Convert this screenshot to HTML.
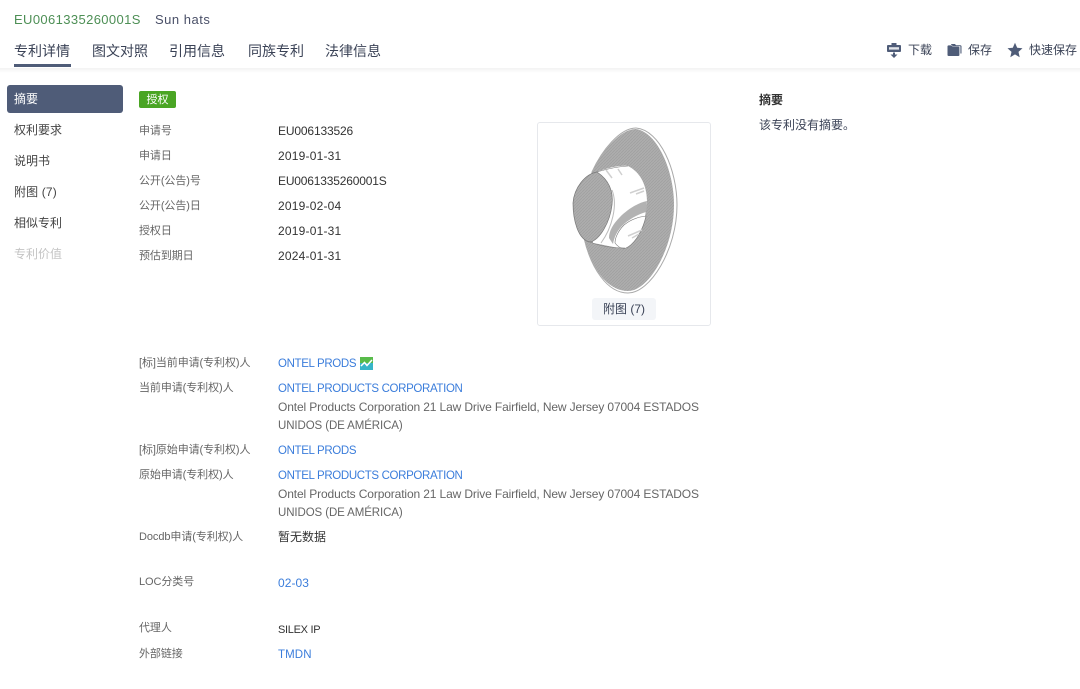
<!DOCTYPE html>
<html lang="zh"><head><meta charset="utf-8"><title>Sun hats</title>
<style>
html,body{margin:0;padding:0;background:#fff}
body{position:relative;width:1080px;height:689px;overflow:hidden;font-family:"Liberation Sans","Noto Sans CJK SC",sans-serif;color:#333}
.t{position:absolute;white-space:nowrap;line-height:20px;height:20px}
.l{font-size:11px;color:#666;left:139px;letter-spacing:-.08px}
.v{font-size:12px;color:#333;left:278px;letter-spacing:.2px}
.c{font-size:11.500px;letter-spacing:-.35px;margin-top:1px}
.a{color:#3b7ddb}
.g{color:#666}
.s{font-size:12px;left:14px;color:#444}
.n{font-size:14px;top:41px;color:#3a4256}
.r{font-size:12px;top:40px;color:#3a4256}
</style></head><body>
<div style="position:absolute;left:0;top:68px;width:1080px;height:5px;background:linear-gradient(#f3f3f3,#fff)"></div>
<div class="t" style="left:14px;top:10px;font-size:13px;color:#4d8f55;letter-spacing:.38px">EU0061335260001S</div>
<div class="t" style="left:155px;top:10px;font-size:13px;color:#4a5068;letter-spacing:.5px">Sun hats</div>
<div class="t n" style="left:14px">专利详情</div>
<div class="t n" style="left:92px">图文对照</div>
<div class="t n" style="left:169px">引用信息</div>
<div class="t n" style="left:248px">同族专利</div>
<div class="t n" style="left:325px">法律信息</div>
<div style="position:absolute;left:14px;top:64px;width:57px;height:3px;background:#4f5c78"></div>

<svg style="position:absolute;left:887px;top:43px" width="14" height="15" viewBox="0 0 14 15"><path d="M4.500 0h5v2h3.500c.6 0 1 .4 1 1v5c0 .6-.4 1-1 1H1c-.6 0-1-.4-1-1V3c0-.6.4-1 1-1h3.500z" fill="#4f5c78"/><path d="M2 4.200h10v2.400H2z" fill="#e2e5ea"/><path d="M6 9.500h2v2h2.500L7 15l-3.500-3.500H6z" fill="#4f5c78"/></svg>
<div class="t r" style="left:908px">下载</div>
<svg style="position:absolute;left:947px;top:43px" width="15" height="14" viewBox="0 0 15 14"><path d="M0.500 3.500C0.500 2.800 1 2.400 1.600 2.400H4.500L5.600 3.600H11.500C12 3.600 12.400 4 12.400 4.600V12C12.400 12.600 12 13 11.400 13H1.600C1 13 .5 12.600 .5 12Z" fill="#4f5c78"/><path d="M4 1H8L9 2.200H13.400C14 2.200 14.500 2.700 14.500 3.300V10.500H13.400V3.200H5.600L4.800 1.800H4Z" fill="#4f5c78"/></svg>
<div class="t r" style="left:968px">保存</div>
<svg style="position:absolute;left:1007px;top:42px" width="16" height="16" viewBox="0 0 16 16"><path d="M8 .8l2.200 5 5.300.5-4 3.600 1.200 5.300L8 12.400l-4.700 2.800 1.200-5.300-4-3.600 5.300-.5z" fill="#4f5c78"/></svg>
<div class="t r" style="left:1029px">快速保存</div>

<div style="position:absolute;left:7px;top:85px;width:116px;height:28px;background:#4f5c78;border-radius:3px"></div>
<div class="t s" style="top:89px;color:#fff">摘要</div>
<div class="t s" style="top:120px">权利要求</div>
<div class="t s" style="top:151px">说明书</div>
<div class="t s" style="top:182px;letter-spacing:.15px">附图 (7)</div>
<div class="t s" style="top:213px">相似专利</div>
<div class="t s" style="top:244px;color:#c4c4c4">专利价值</div>

<div style="position:absolute;left:139px;top:91px;width:37px;height:17px;background:#4aa524;border-radius:2px;color:#fff;font-size:11px;line-height:18px;text-align:center">授权</div>

<div class="t l" style="top:121px">申请号</div><div class="t v" style="top:121px;letter-spacing:-.15px">EU006133526</div>
<div class="t l" style="top:146px">申请日</div><div class="t v" style="top:146px">2019-01-31</div>
<div class="t l" style="top:171px">公开(公告)号</div><div class="t v" style="top:171px;letter-spacing:-.18px">EU0061335260001S</div>
<div class="t l" style="top:196px">公开(公告)日</div><div class="t v" style="top:196px">2019-02-04</div>
<div class="t l" style="top:221px">授权日</div><div class="t v" style="top:221px">2019-01-31</div>
<div class="t l" style="top:246px">预估到期日</div><div class="t v" style="top:246px">2024-01-31</div>

<div style="position:absolute;left:537px;top:122px;width:172px;height:202px;border:1px solid #e6e8ec;border-radius:3px"></div>
<svg style="position:absolute;left:0;top:0" width="1080" height="689" viewBox="0 0 1080 689">
<defs><pattern id="p" width="3" height="3" patternUnits="userSpaceOnUse"><rect width="3" height="3" fill="#adadad"/><path d="M0 3L3 0" stroke="#9f9f9f" stroke-width=".7"/></pattern></defs>
<path d="M592 172C602 150 620 128 636 128C660 130 677 170 677 205C677 250 650 293 628 293C607 293 591 268 584 238Z" fill="#fff" stroke="#aaa" stroke-width="1"/>
<path d="M592 172C602 151 620 129 636 129C657 132 674 170 674 205C674 248 649 291 628 291C607 291 591 268 584 238Z" fill="url(#p)"/>
<path d="M597 172C607 168 620 165 628 166C640 172 647 185 647 202L645 217L626 248C620 249 605 245 593 243Z" fill="#fff"/>
<path d="M647 201C637 203 627 210 620 217C613 224 609 231 609 238L613 244C614 238 617 230 624 224C631 218 639 214 646 212Z" fill="#b2b2b2"/>
<path d="M646 216C638 217 630 220 624 225C618 231 615 238 615 243C618 247 622 249 626 248C635 244 643 230 646 216Z" fill="#fff" stroke="#777" stroke-width=".6"/>
<path d="M606 170L612 178M618 169L622 175M644 188L630 193M644 191L636 194M642 230L628 236M639 234L632 238" stroke="#d0d0d0" stroke-width="1.500" fill="none"/>
<path d="M597 172C606 178 614 188 612 205C610 222 600 240 590 242C578 240 573 220 573 203C574 188 585 174 597 172Z" fill="url(#p)" stroke="#777" stroke-width=".7"/>
<path d="M612 190C618 205 612 228 601 243" stroke="#bbb" stroke-width="1" fill="none"/>
<path d="M597 172C604 170 614 167 628 166M590 242C597 245 610 248 625 248" stroke="#777" stroke-width=".5" fill="none"/>
</svg>
<div style="position:absolute;left:592px;top:298px;width:64px;height:22px;background:#f3f5f8;border-radius:3px;font-size:12px;line-height:22px;text-align:center;color:#3a4256">附图 (7)</div>

<div class="t" style="left:759px;top:90px;font-size:12px;font-weight:bold;color:#333">摘要</div>
<div class="t" style="left:759px;top:115px;font-size:12px;color:#3a4256">该专利没有摘要。</div>

<div class="t l" style="top:353px">[标]当前申请(专利权)人</div><div class="t v a c" style="top:353px">ONTEL PRODS</div>
<svg style="position:absolute;left:360px;top:357px" width="13" height="13" viewBox="0 0 13 13"><rect width="13" height="13" fill="#37b5c8"/><rect width="13" height="6" fill="#58bb4a"/><path d="M1 9L4.500 5.500 7 8.500 12 3" stroke="#fff" stroke-width="1.500" fill="none"/></svg>
<div class="t l" style="top:378px">当前申请(专利权)人</div><div class="t v a c" style="top:378px">ONTEL PRODUCTS CORPORATION</div>
<div class="t v g" style="top:397px;letter-spacing:-.13px">Ontel Products Corporation 21 Law Drive Fairfield, New Jersey 07004 ESTADOS</div>
<div class="t v g c" style="top:415px;letter-spacing:-.1px">UNIDOS (DE AMÉRICA)</div>
<div class="t l" style="top:440px">[标]原始申请(专利权)人</div><div class="t v a c" style="top:440px">ONTEL PRODS</div>
<div class="t l" style="top:465px">原始申请(专利权)人</div><div class="t v a c" style="top:465px">ONTEL PRODUCTS CORPORATION</div>
<div class="t v g" style="top:484px;letter-spacing:-.13px">Ontel Products Corporation 21 Law Drive Fairfield, New Jersey 07004 ESTADOS</div>
<div class="t v g c" style="top:502px;letter-spacing:-.1px">UNIDOS (DE AMÉRICA)</div>
<div class="t l" style="top:527px">Docdb申请(专利权)人</div><div class="t v" style="top:527px;letter-spacing:0">暂无数据</div>
<div class="t l" style="top:572px">LOC分类号</div><div class="t v a" style="top:573px;letter-spacing:.05px">02-03</div>
<div class="t l" style="top:618px">代理人</div><div class="t v c" style="top:619px;font-size:11px;letter-spacing:-.3px">SILEX IP</div>
<div class="t l" style="top:644px">外部链接</div><div class="t v a c" style="top:644px;letter-spacing:.1px">TMDN</div>
</body></html>
